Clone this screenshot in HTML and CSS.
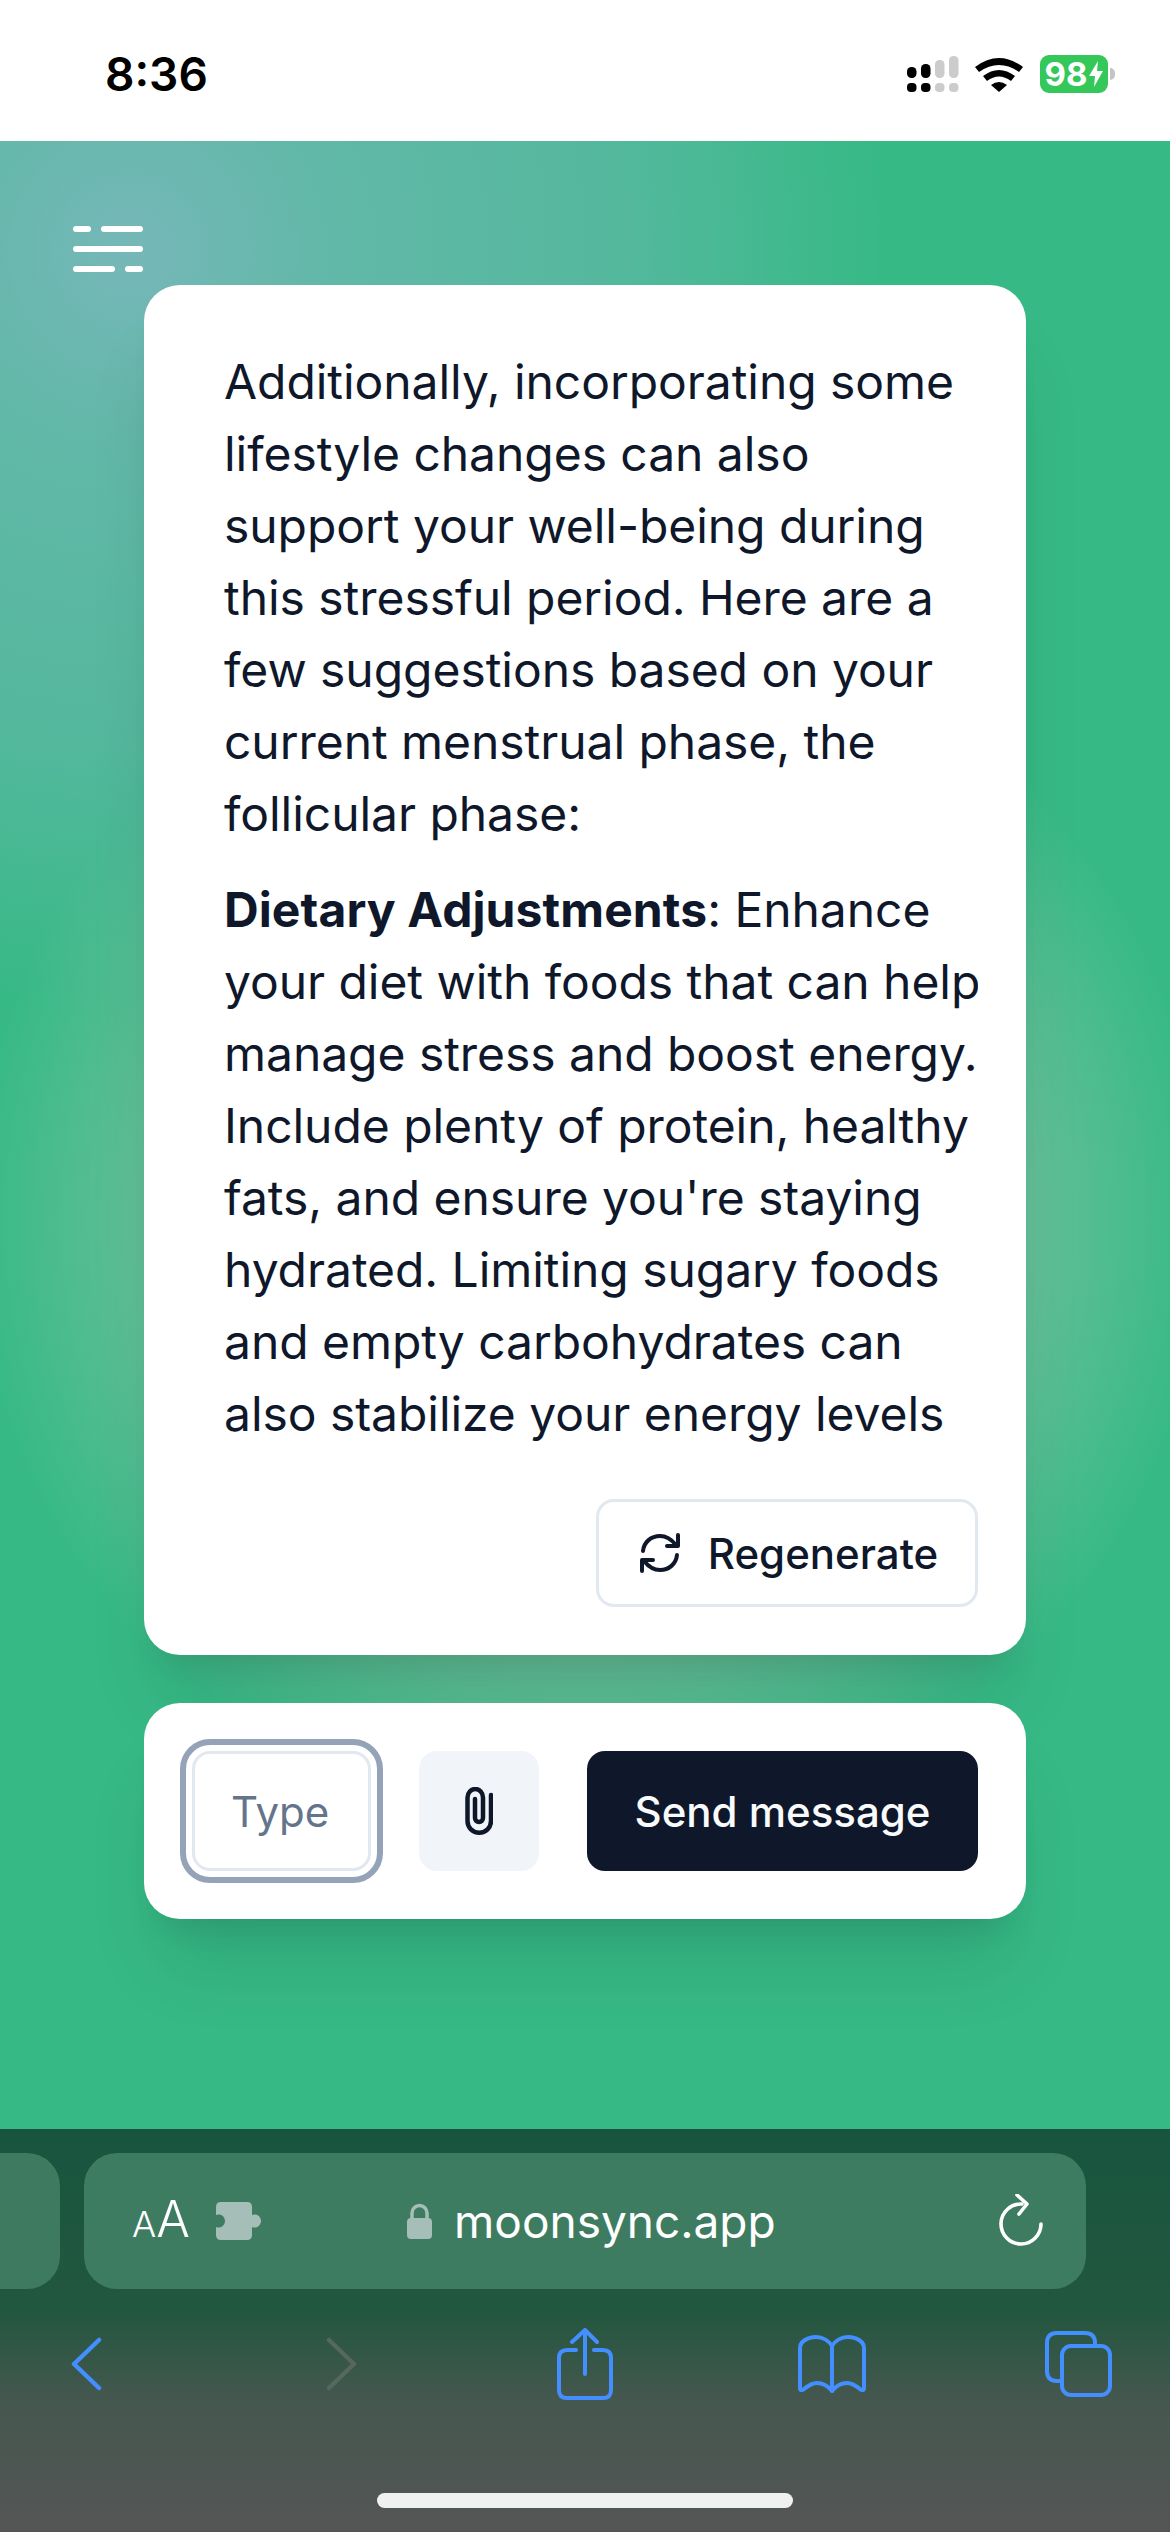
FILE: index.html
```html
<!DOCTYPE html>
<html lang="en">
<head>
    <meta charset="UTF-8">
    <meta name="viewport" content="width=device-width, initial-scale=1.0">
    <title>MoonSync</title>
    <link rel="stylesheet" href="styles.css">
</head>
<body>

    <!-- iOS status bar -->
    <header class="status-bar">
        <span class="clock">8:36</span>
        <div class="status-icons">
            <svg class="signal" width="52" height="36" viewBox="0 0 52 36">
                <rect x="0" y="11" width="9.500" height="11" rx="4.500" fill="#000"/>
                <rect x="14" y="8" width="9.500" height="14" rx="4.500" fill="#000"/>
                <rect x="28" y="4" width="9.500" height="18" rx="4.500" fill="#ccc"/>
                <rect x="42" y="0" width="9.500" height="22" rx="4.500" fill="#ccc"/>
                <rect x="0" y="27" width="9.500" height="9" rx="4" fill="#000"/>
                <rect x="14" y="27" width="9.500" height="9" rx="4" fill="#000"/>
                <rect x="28" y="27" width="9.500" height="9" rx="4" fill="#ccc"/>
                <rect x="42" y="27" width="9.500" height="9" rx="4" fill="#ccc"/>
            </svg>
            <svg class="wifi" width="48" height="36" viewBox="0 0 48 36">
                <path d="M0 11 Q24 -7 48 11 L44 16 Q24 2 4 16 Z" fill="#000"/>
                <path d="M8 20 Q24 8 40 20 L36 25 Q24 16 12 25 Z" fill="#000"/>
                <path d="M16 29 Q24 23 32 29 L24 36 Z" fill="#000"/>
            </svg>
            <div class="battery">
                <span class="battery-level">98</span>
                <svg width="14" height="26" viewBox="0 0 14 26">
                    <path d="M9 0 L0 15 H6 L5 26 L14 10 H8 Z" fill="#fff"/>
                </svg>
            </div>
            <span class="battery-cap"></span>
        </div>
    </header>

    <!-- Page -->
    <main class="page">
        <div class="menu-icon">
            <div class="menu-line"><span class="seg-short"></span><span class="seg-long"></span></div>
            <div class="menu-line"><span class="seg-full"></span></div>
            <div class="menu-line"><span class="seg-long"></span><span class="seg-short"></span></div>
        </div>

        <section class="chat-card">
            <div class="message">
                <p>Additionally, incorporating some lifestyle changes can also support your well-being during this stressful period. Here are a few suggestions based on your current menstrual phase, the follicular phase:</p>
                <p><strong>Dietary Adjustments</strong>: Enhance your diet with foods that can help manage stress and boost energy. Include plenty of protein, healthy fats, and ensure you're staying hydrated. Limiting sugary foods and empty carbohydrates can also stabilize your energy levels</p>
            </div>
            <div class="actions">
                <button class="btn-regenerate">
                    <svg width="40" height="40" viewBox="0 0 40 40" fill="none" stroke="#0f172a" stroke-width="4" stroke-linecap="round" stroke-linejoin="round">
                        <path d="M3 18 C4 9 11 3 20 3 C27 3 32 7 36 12"/>
                        <path d="M38 2 V13 H27"/>
                        <path d="M37 22 C36 31 29 37 20 37 C13 37 8 33 4 28"/>
                        <path d="M2 38 V27 H13"/>
                    </svg>
                    Regenerate
                </button>
            </div>
        </section>

        <form class="composer">
            <div class="input-ring"><div class="input-box">Type</div></div>
            <button type="button" class="btn-attach">
                <svg width="28" height="48" viewBox="0 0 28 48" fill="none" stroke="#0f172a" stroke-width="4.500" stroke-linecap="round">
                    <path d="M26 8 V34 A11.750 11.750 0 0 1 2.500 34 V10.500 A7.750 8.500 0 0 1 18 10.500 V31 A4 4 0 0 1 10 31 V12"/>
                </svg>
            </button>
            <button type="button" class="btn-send">Send message</button>
        </form>
    </main>

    <!-- Safari toolbar -->
    <footer class="safari">
        <div class="url-row">
            <div class="tab-peek"></div>
            <div class="url-pill">
                <div class="url-left">
                    <span class="aa"><span class="aa-small">A</span><span class="aa-big">A</span></span>
                    <svg width="47" height="38" viewBox="0 0 47 38">
                        <path d="M5 0 H31 Q36 0 36 5 V13 A6.500 6.500 0 1 1 36 25 V33 Q36 38 31 38 H5 Q0 38 0 33 V25 A6.500 6.500 0 1 0 0 13 V5 Q0 0 5 0 Z" fill="#a6beb8"/>
                    </svg>
                </div>
                <svg class="lock" width="25" height="36" viewBox="0 0 25 36">
                    <path d="M5 17 V10 A7.500 7.500 0 0 1 20 10 V17" fill="none" stroke="#a6beb8" stroke-width="3.500"/>
                    <rect x="0" y="15" width="25" height="21" rx="4" fill="#a6beb8"/>
                </svg>
                <span class="url-text">moonsync.app</span>
                <svg class="reload" width="46" height="54" viewBox="0 0 46 54" fill="none" stroke="#fff" stroke-width="3.600" stroke-linecap="round" stroke-linejoin="round">
                    <path d="M24 10 A20 20 0 1 0 43 30"/>
                    <path d="M19 1 L29 10 L21 20"/>
                </svg>
            </div>
        </div>
        <nav class="tool-row">
            <svg class="tool-back" width="31" height="54" viewBox="0 0 31 54" fill="none" stroke="#448fff" stroke-width="4.500" stroke-linecap="round" stroke-linejoin="round"><path d="M28 3 L3 27 L28 51"/></svg>
            <svg class="tool-forward" width="31" height="54" viewBox="0 0 31 54" fill="none" stroke="#55675e" stroke-width="4.500" stroke-linecap="round" stroke-linejoin="round"><path d="M3 3 L28 27 L3 51"/></svg>
            <svg class="tool-share" width="56" height="72" viewBox="0 0 56 72" fill="none" stroke="#448fff" stroke-width="4" stroke-linecap="round" stroke-linejoin="round"><path d="M19 22 H10 Q2 22 2 30 V62 Q2 70 10 70 H46 Q54 70 54 62 V30 Q54 22 46 22 H37"/><path d="M28 46 V3"/><path d="M15 14 L28 2 L40 14"/></svg>
            <svg class="tool-book" width="70" height="58" viewBox="0 0 70 58" fill="none" stroke="#448fff" stroke-width="4" stroke-linecap="round" stroke-linejoin="round"><path d="M3 54 V13 C3 7 10 2 19 2 C26 2 32 6 35 11 C38 6 44 2 51 2 C60 2 67 7 67 13 V54 C66 56 64 55 63 54 C58 50 55 48 50 48 C44 48 39 51 35 56 C31 51 26 48 20 48 C15 48 12 50 7 54 C6 55 4 56 3 54 Z"/><path d="M35 11 V56"/></svg>
            <svg class="tool-tabs" width="67" height="66" viewBox="0 0 67 66" fill="none" stroke="#448fff" stroke-width="4" stroke-linecap="round" stroke-linejoin="round"><path d="M17 50 H12 Q2 50 2 40 V12 Q2 2 12 2 H40 Q50 2 50 12 V15"/><rect x="17" y="15" width="48" height="49" rx="9"/></svg>
        </nav>
        <div class="home-indicator"></div>
    </footer>

</body>
</html>
```

FILE: styles.css
```css
/* Page Styles */
body {
    font-family: 'Inter', sans-serif;
    margin: 0;
    width: 1170px;
    height: 2532px;
    overflow: hidden;
    background: #36b985;
    color: #0f172a;
}

/* Status bar */
.status-bar {
    height: 141px;
    box-sizing: border-box;
    background: #fff;
    padding: 6px 55px 0 105px;
    display: flex;
    align-items: center;
    justify-content: space-between;
}

.clock {
    font-size: 46px;
    font-weight: 600;
    color: #000;
}

.status-icons {
    display: flex;
    align-items: center;
}

.wifi {
    margin-left: 16px;
}

.battery {
    margin-left: 17px;
    width: 68px;
    height: 38px;
    box-sizing: border-box;
    background: #34c759;
    border-radius: 9px;
    display: flex;
    align-items: center;
    justify-content: center;
    gap: 2px;
}

.battery-level {
    font-size: 33px;
    font-weight: 700;
    color: #fff;
}

.battery-cap {
    width: 5px;
    height: 12px;
    margin-left: 2px;
    background: #c4c4c4;
    border-radius: 0 6px 6px 0;
}

/* Main area with the blurred blobs */
.page {
    height: 1988px;
    box-sizing: border-box;
    padding: 85px 144px 0;
    background:
        radial-gradient(circle 760px at 130px 110px, rgba(125, 183, 190, 0.9) 0%, rgba(125, 183, 190, 0.62) 25%, rgba(125, 183, 190, 0.42) 65%, rgba(125, 183, 190, 0) 100%),
        radial-gradient(circle 620px at 590px 1079px, rgba(170, 200, 180, 0.8) 0%, rgba(170, 200, 180, 0.41) 69%, rgba(170, 200, 180, 0) 100%),
        #36b985;
}

.menu-icon {
    width: 70px;
    margin-left: -71px;
    display: flex;
    flex-direction: column;
    gap: 14px;
    height: 46px;
    margin-bottom: 13px;
}

.menu-line {
    display: flex;
    justify-content: space-between;
}

.menu-line span {
    height: 6px;
    background: #fff;
    border-radius: 3px;
}

.seg-short {
    width: 18px;
}

.seg-long {
    width: 42px;
}

.seg-full {
    width: 70px;
}

.chat-card {
    background: #fff;
    border-radius: 36px;
    height: 1370px;
    box-sizing: border-box;
    padding: 61px 48px 48px 80px;
    box-shadow: 0 60px 75px -15px rgba(0, 0, 0, 0.1), 0 24px 30px -18px rgba(0, 0, 0, 0.1);
}

/* text runs past the box and gets clipped at the right, same as the app */
.message {
    height: 1104px;
    overflow: hidden;
    font-size: 48px;
    line-height: 72px;
    letter-spacing: -0.05px;
}

.message p {
    margin: 0 0 24px;
    width: 770px;
}

.message strong {
    font-weight: 700;
    letter-spacing: 0.1px;
}

.actions {
    margin-top: 49px;
    display: flex;
    justify-content: flex-end;
}

.btn-regenerate {
    height: 108px;
    width: 382px;
    background: #fff;
    border: 3px solid #e2e8f0;
    border-radius: 18px;
    font-family: 'Inter', sans-serif;
    font-size: 42px;
    font-weight: 500;
    color: #0f172a;
    display: flex;
    align-items: center;
    justify-content: center;
    gap: 28px;
    padding: 0 0 0 4px;
}

.composer {
    margin-top: 48px;
    height: 216px;
    box-sizing: border-box;
    background: #fff;
    border-radius: 36px;
    padding: 36px 48px 36px 36px;
    display: flex;
    align-items: center;
    box-shadow: 0 60px 75px -15px rgba(0, 0, 0, 0.1), 0 24px 30px -18px rgba(0, 0, 0, 0.1);
}

.input-ring {
    width: 203px;
    height: 144px;
    box-sizing: border-box;
    border: 6px solid #94a3b8;
    border-radius: 30px;
    padding: 6px;
    flex-shrink: 0;
}

.input-box {
    height: 100%;
    box-sizing: border-box;
    border: 3px solid #e2e8f0;
    border-radius: 18px;
    padding-left: 36px;
    display: flex;
    align-items: center;
    font-size: 42px;
    color: #64748b;
}

.btn-attach {
    margin-left: 36px;
    width: 120px;
    height: 120px;
    border: none;
    border-radius: 18px;
    background: #f1f5f9;
    display: flex;
    align-items: center;
    justify-content: center;
    padding: 0;
    flex-shrink: 0;
}

.btn-send {
    margin-left: 48px;
    width: 391px;
    height: 120px;
    border: none;
    border-radius: 18px;
    background: #0f172a;
    color: #f8fafc;
    font-family: 'Inter', sans-serif;
    font-size: 42px;
    font-weight: 500;
    padding: 0;
}

/* Safari toolbar */
.safari {
    height: 403px;
    box-sizing: border-box;
    padding-top: 24px;
    background: linear-gradient(to bottom, #18553f 0%, #22573f 45%, #46574f 68%, #545555 100%);
}

.url-row {
    display: flex;
    gap: 24px;
    height: 136px;
}

.tab-peek {
    width: 60px;
    background: #3d7a60;
    border-radius: 0 33px 33px 0;
}

.url-pill {
    width: 1002px;
    box-sizing: border-box;
    background: #3e7c62;
    border-radius: 33px;
    padding: 0 42px 0 48px;
    display: flex;
    align-items: center;
    color: #fff;
}

.url-left {
    display: flex;
    align-items: center;
    gap: 28px;
    width: 275px;
}

.aa {
    line-height: 38px;
    display: flex;
    align-items: baseline;
    width: 56px;
    font-weight: 300;
}

.aa-small {
    font-size: 36px;
}

.aa-big {
    font-size: 50px;
}

.url-text {
    margin-left: 22px;
    font-size: 46px;
}

.reload {
    margin-left: auto;
}

.tool-row {
    margin-top: 35px;
    height: 80px;
    padding-left: 71px;
    display: flex;
    align-items: center;
}

.tool-forward {
    margin-left: 224px;
}

.tool-share {
    margin-left: 200px;
}

.tool-book {
    margin-left: 184px;
}

.tool-tabs {
    margin-left: 178px;
}

.home-indicator {
    width: 416px;
    height: 15px;
    margin: 89px auto 0;
    background: #f0f0f0;
    border-radius: 8px;
}
```
